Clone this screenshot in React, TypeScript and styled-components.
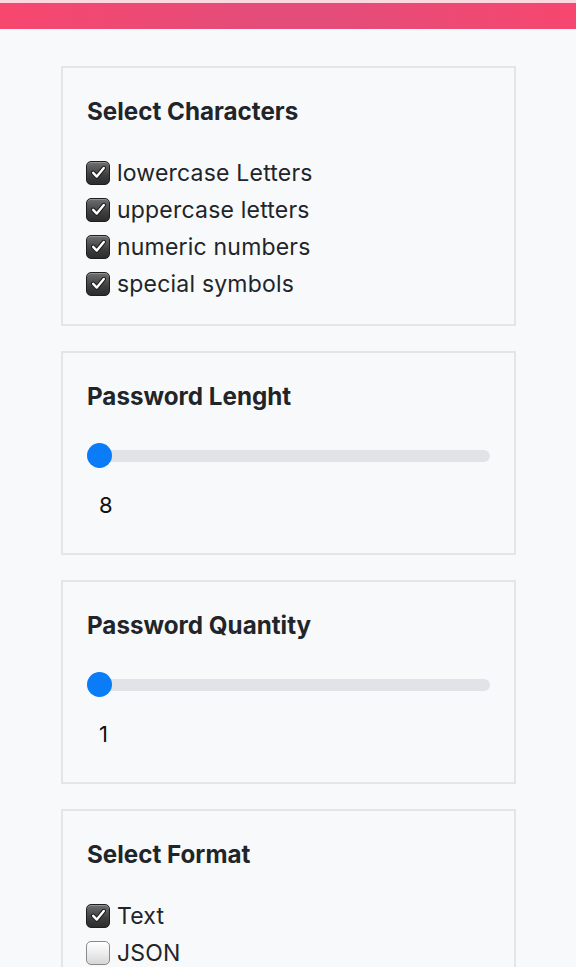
import React from "react";
import styled, { createGlobalStyle } from "styled-components";

const GlobalStyle = createGlobalStyle`
  html, body {
    margin: 0;
    padding: 0;
    background: #f8f9fa;
    font-family: Inter, "Noto Sans", "Liberation Sans", sans-serif;
    color: #212529;
  }
  * { box-sizing: border-box; }
`;

const TopBar = styled.header`
  height: 29px;
  border-top: 3px solid #fbd8e0;
  background: linear-gradient(90deg, #f7476f 0%, #e44c79 45%, #e54c79 60%, #f6476f 100%);
`;

const Main = styled.main`
  display: flex;
  flex-direction: column;
  gap: 25px;
  padding: 37px 60px 40px 61px;
`;

const Card = styled.section<{ $bottom: number }>`
  border: 2px solid #e4e5e7;
  padding: 29px 24px ${(p) => p.$bottom}px;
  background: #f8f9fa;
`;

const Title = styled.h2`
  margin: 0;
  font-size: 24.2px;
  line-height: 30px;
  font-weight: 700;
  color: #212529;
`;

const List = styled.div`
  display: flex;
  flex-direction: column;
  margin-top: 27px;
`;

const Item = styled.label`
  display: flex;
  align-items: center;
  gap: 8px;
  height: 37px;
  font-size: 23px;
  letter-spacing: 0.2px;
  color: #212529;
`;

const Box = styled.span<{ $checked: boolean }>`
  display: flex;
  align-items: center;
  justify-content: center;
  flex: none;
  width: 24px;
  height: 24px;
  border-radius: 5px;
  margin-left: -1px;
  margin-right: -1px;
  border: 1px solid ${(p) => (p.$checked ? "#1e1e1e" : "#8a8a8a")};
  background: ${(p) =>
    p.$checked
      ? "linear-gradient(180deg, #707070 0%, #3e3e3e 60%, #2c2c2c 100%)"
      : "linear-gradient(180deg, #ffffff 0%, #e9e9e9 60%, #d6d6d6 100%)"};
  box-shadow: inset 0 1px 0 rgba(255, 255, 255, 0.25);
`;

const Range = styled.input`
  -webkit-appearance: none;
  appearance: none;
  display: block;
  width: 100%;
  height: 25px;
  margin: 31px 0 0;
  background: transparent;

  &::-webkit-slider-runnable-track {
    height: 12px;
    border-radius: 6px;
    background: #e1e3e7;
  }
  &::-webkit-slider-thumb {
    -webkit-appearance: none;
    width: 25px;
    height: 25px;
    margin-top: -6.5px;
    border-radius: 50%;
    border: none;
    background: #0b7cf7;
  }
`;

const Value = styled.div`
  margin-top: 22px;
  padding-left: 12px;
  font-size: 22px;
  line-height: 30px;
  color: #111;
`;

const Check = ({ checked }: { checked: boolean }) => (
  <Box $checked={checked}>
    {checked && (
      <svg width="19" height="19" viewBox="0 0 19 19">
        <path
          d="M4.2 9.8 L7.8 13.6 L14.8 5"
          fill="none"
          stroke="#1a1a1a"
          strokeWidth="4.4"
          strokeLinecap="round"
          strokeLinejoin="round"
        />
        <path
          d="M4.2 9.8 L7.8 13.6 L14.8 5"
          fill="none"
          stroke="#ffffff"
          strokeWidth="2.4"
          strokeLinecap="round"
          strokeLinejoin="round"
        />
      </svg>
    )}
  </Box>
);

const CheckItem = ({ label, checked }: { label: string; checked: boolean }) => (
  <Item>
    <Check checked={checked} />
    {label}
  </Item>
);

const SliderCard = ({ title, value, max }: { title: string; value: number; max: number }) => (
  <Card $bottom={33}>
    <Title>{title}</Title>
    <Range type="range" min={value} max={max} defaultValue={value} />
    <Value>{value}</Value>
  </Card>
);

export default function App() {
  return (
    <>
      <GlobalStyle />
      <TopBar />
      <Main>
        <Card $bottom={22}>
          <Title>Select Characters</Title>
          <List>
            <CheckItem label="lowercase Letters" checked />
            <CheckItem label="uppercase letters" checked />
            <CheckItem label="numeric numbers" checked />
            <CheckItem label="special symbols" checked />
          </List>
        </Card>
        <SliderCard title="Password Lenght" value={8} max={64} />
        <SliderCard title="Password Quantity" value={1} max={20} />
        <Card $bottom={22}>
          <Title>Select Format</Title>
          <List>
            <CheckItem label="Text" checked />
            <CheckItem label="JSON" checked={false} />
          </List>
        </Card>
      </Main>
    </>
  );
}
